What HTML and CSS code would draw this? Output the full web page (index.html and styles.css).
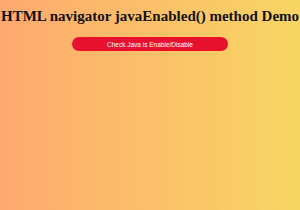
FILE: index.html
```html
<!DOCTYPE html>
<html>
<head>
<meta charset="utf-8">
<link rel="stylesheet" href="styles.css">
</head>
<body>
<div class="page">
  <h1 class="title">HTML navigator javaEnabled() method Demo</h1>
  <button class="btn">Check Java is Enable/Disable</button>
</div>
</body>
</html>
```
FILE: styles.css
```css
html, body {
  margin: 0;
  padding: 0;
  height: 100%;
  overflow: hidden;
}
body {
  background: linear-gradient(to right, #fea96f, #f8d663);
  font-family: "Liberation Serif", serif;
}
.page {
  display: flex;
  flex-direction: column;
  align-items: center;
  padding-top: 7px;
}
.title {
  margin: 0;
  font-size: 15px;
  font-weight: bold;
  white-space: nowrap;
  color: #111;
  line-height: 18px;
}
.btn {
  margin-top: 12px;
  width: 156px;
  height: 14px;
  border: none;
  border-radius: 7px;
  background: #e8112d;
  color: #fff;
  font-family: "Liberation Sans", Arial, sans-serif;
  font-size: 6.5px;
  padding: 0;
}
```
